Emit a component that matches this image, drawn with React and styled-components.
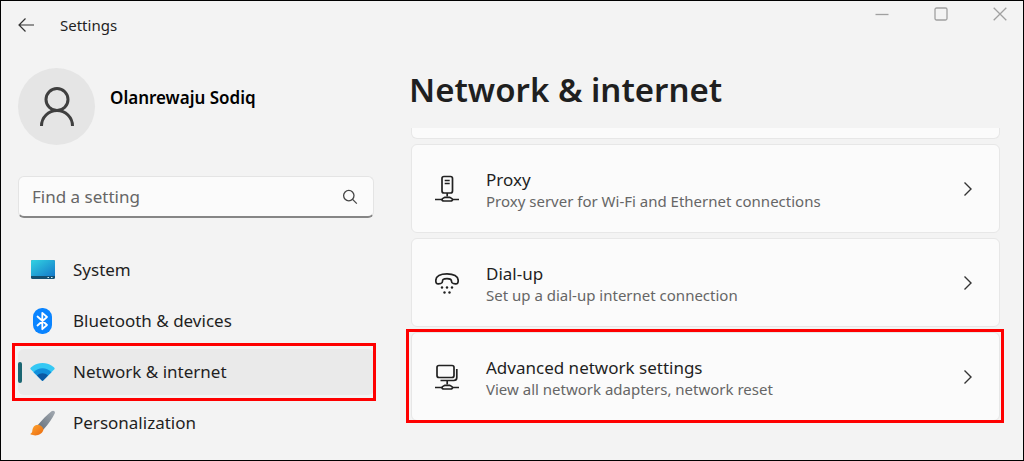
import React from 'react';
import styled, { createGlobalStyle, css } from 'styled-components';

const GlobalStyle = createGlobalStyle`
  * {
    box-sizing: border-box;
  }

  body {
    margin: 0;
    background: #f3f3f3;
    color: #1f1f1f;
    font-family: "Noto Sans", "Open Sans", sans-serif;
  }

  button,
  input {
    font-family: inherit;
    color: inherit;
  }
`;

// Red frame drawn over the highlighted entries
const highlight = css`
  &::after {
    content: '';
    position: absolute;
    inset: ${(props) => props.$inset};
    border: 3px solid #fe0000;
    pointer-events: none;
  }
`;

const Window = styled.div`
  display: flex;
  flex-direction: column;
  min-height: 100vh;
  border: 1px solid #000;
`;

const TitleBar = styled.header`
  display: flex;
  align-items: flex-start;
  height: 48px;
`;

const BackButton = styled.button`
  display: flex;
  padding: 16px 16px;
  border: 0;
  background: none;
`;

const AppName = styled.span`
  flex: 1;
  margin-left: 9px;
  font-size: 15px;
  line-height: 48px;
`;

const Captions = styled.div`
  display: flex;
  gap: 13px;
`;

const CaptionButton = styled.button`
  display: flex;
  align-items: center;
  justify-content: center;
  width: 46px;
  height: 26px;
  padding: 0;
  border: 0;
  background: none;
  color: #a0a0a0;
`;

const Body = styled.div`
  display: flex;
  flex: 1;
  gap: 37px;
  padding: 0 23px 12px 17px;
`;

const Sidebar = styled.aside`
  flex: 0 0 356px;
  padding-top: 19px;
`;

const Profile = styled.div`
  display: flex;
  align-items: center;
  gap: 15px;
`;

const Avatar = styled.div`
  display: flex;
  align-items: center;
  justify-content: center;
  width: 77px;
  height: 77px;
  border-radius: 50%;
  background: #e5e5e5;
`;

const UserName = styled.div`
  padding-bottom: 18px;
  font-size: 17px;
  font-weight: 600;
  line-height: 24px;
  color: #000;
`;

const SearchBox = styled.label`
  display: flex;
  align-items: center;
  height: 42px;
  margin: 31px 0 29px;
  padding: 0 15px 0 13px;
  border: 1px solid #e4e4e4;
  border-bottom: 2px solid #868686;
  border-radius: 6px;
  background: #fbfbfb;
`;

const SearchInput = styled.input`
  flex: 1;
  min-width: 0;
  padding: 0;
  border: 0;
  outline: 0;
  background: none;
  font-size: 17px;
  line-height: 24px;

  &::placeholder {
    color: #666;
    opacity: 1;
  }
`;

const Nav = styled.nav`
  display: flex;
  flex-direction: column;
  gap: 5px;
`;

const NavItem = styled.a`
  position: relative;
  display: flex;
  align-items: center;
  gap: 18px;
  height: 46px;
  padding-left: 12px;
  border-radius: 6px;
  background: ${(props) => (props.$active ? '#eaeaea' : 'transparent')};
  color: #1f1f1f;
  font-size: 17px;
  line-height: 24px;
  text-decoration: none;

  ${(props) =>
    props.$active &&
    css`
      &::before {
        content: '';
        position: absolute;
        left: 0;
        width: 4px;
        height: 21px;
        border-radius: 2px;
        background: #1b6672;
      }
    `}

  ${(props) => props.$inset && highlight}
`;

const Main = styled.main`
  flex: 1;
  min-width: 0;
`;

const Title = styled.h1`
  margin: 17px 0 14px -2px;
  font-size: 33px;
  font-weight: 600;
  line-height: 48px;
`;

const CardList = styled.div`
  display: flex;
  flex-direction: column;
  gap: 5px;
`;

const CardTail = styled.div`
  height: 11px;
  border: 1px solid #e7e7e7;
  border-top: 0;
  border-radius: 0 0 6px 6px;
  background: #fbfbfb;
`;

const Card = styled.button`
  position: relative;
  display: flex;
  align-items: center;
  height: 89px;
  padding: 0 24px 0 23px;
  border: 1px solid #e7e7e7;
  border-radius: 6px;
  background: #fbfbfb;
  text-align: left;

  ${(props) => props.$inset && highlight}
`;

const CardText = styled.span`
  display: flex;
  flex: 1;
  flex-direction: column;
  margin-left: 27px;
  padding-top: 2px;
`;

const CardTitle = styled.span`
  font-size: 17px;
  line-height: 22px;
`;

const CardHint = styled.span`
  font-size: 15px;
  line-height: 20px;
  color: #666;
`;

const BackIcon = () => (
  <svg width="18" height="16" viewBox="0 0 18 16" fill="none" stroke="#333" strokeWidth="1.2">
    <path d="M17 8H2M8.5 1.5L2 8l6.500 6.500" />
  </svg>
);

const MinimizeIcon = () => (
  <svg width="14" height="14" viewBox="0 0 14 14" fill="none" stroke="currentColor" strokeWidth="1.3">
    <path d="M.5 7.500h13" />
  </svg>
);

const MaximizeIcon = () => (
  <svg width="14" height="14" viewBox="0 0 14 14" fill="none" stroke="currentColor" strokeWidth="1.3">
    <rect x="1" y="1" width="12" height="12" rx="1.500" />
  </svg>
);

const CloseIcon = () => (
  <svg width="14" height="14" viewBox="0 0 14 14" fill="none" stroke="currentColor" strokeWidth="1.3">
    <path d="M.7.7l12.600 12.600M13.300.7L.7 13.300" />
  </svg>
);

const PersonIcon = () => (
  <svg width="36" height="42" viewBox="0 0 36 42" fill="none" stroke="#3f3f3f" strokeWidth="3">
    <circle cx="18" cy="13.500" r="11" />
    <path d="M2.500 40a15.500 15.500 0 0 1 31 0" />
  </svg>
);

const SearchIcon = () => (
  <svg width="16" height="16" viewBox="0 0 16 16" fill="none" stroke="#444" strokeWidth="1.3">
    <circle cx="6.800" cy="6.600" r="5.200" />
    <path d="M10.600 10.400l4.200 4.200" />
  </svg>
);

const SystemIcon = () => (
  <svg width="25" height="20" viewBox="0 0 25 20">
    <defs>
      <linearGradient id="screen" x1="0" y1="0" x2="1" y2="1">
        <stop offset="0" stopColor="#32d3e2" />
        <stop offset="1" stopColor="#1479c9" />
      </linearGradient>
    </defs>
    <rect x="1" y="0" width="24" height="19" rx="1.500" fill="#134f70" />
    <path d="M1 16V1.500A1.500 1.500 0 0 1 2.500 0h21A1.500 1.500 0 0 1 25 1.500V16z" fill="url(#screen)" />
    <path d="M17.500 17h1.500v1h-1.500zM21 17h1.500v1H21z" fill="#d7f2fa" />
  </svg>
);

const BluetoothIcon = () => (
  <svg width="25" height="26" viewBox="0 0 25 26">
    <rect x="3" y="0" width="19" height="26" rx="9" fill="#0a84ff" />
    <path
      d="M7.500 8.500l9.500 8.500-4.700 4.200V4.800L17 9l-9.500 8.500"
      fill="none"
      stroke="#fff"
      strokeWidth="1.800"
      strokeLinejoin="round"
      strokeLinecap="round"
    />
  </svg>
);

const WifiIcon = () => (
  <svg width="25" height="20" viewBox="0 0 25 20">
    <path d="M.3 6.500C.3 5.800 5 1 12.500 1s12.200 4.800 12.200 5.500c0 .4-.4.900-.8 1.300L12.500 19 1.100 7.800c-.4-.4-.8-.9-.8-1.300z" fill="#35c8f4" />
    <path d="M3.500 10.200C8.500 4.800 16.500 4.800 21.500 10.200L12.500 19z" fill="#1290dc" />
    <path d="M7 13.600c3.200-3.200 7.800-3.200 11 0l-4.800 4.900a1 1 0 0 1-1.400 0z" fill="#0c59a4" />
  </svg>
);

const BrushIcon = () => (
  <svg width="25" height="26" viewBox="0 0 25 26">
    <defs>
      <linearGradient id="handle" x1="1" y1="0" x2="0" y2="1">
        <stop offset="0" stopColor="#a3aab2" />
        <stop offset="1" stopColor="#66707b" />
      </linearGradient>
      <linearGradient id="bristle" x1="0" y1="0" x2="1" y2="1">
        <stop offset="0" stopColor="#ffa52f" />
        <stop offset="1" stopColor="#ea6a10" />
      </linearGradient>
    </defs>
    <path d="M21.500 1.300c1.800-1.500 4.200.1 3.200 2.300-2 4.500-6 10.400-11.200 16L8 14.800C12 10 17 5 21.500 1.300z" fill="url(#handle)" />
    <path d="M8 14.800c2.500.3 5 2.400 5.500 4.800C12.500 25 6 26.500.8 24.600c-.5-.2-.5-.8 0-1 2.200-1.200 1-3.100 2.200-5.600 1-2 2.800-3.200 5-3.200z" fill="url(#bristle)" />
  </svg>
);

const ProxyIcon = () => (
  <svg width="24" height="28" viewBox="0 0 24 28" fill="none" stroke="#222" strokeWidth="1.700">
    <rect x="7" y="1.500" width="10.500" height="16.500" rx="2" />
    <path d="M9.700 5.500h5M9.700 8.500h5M12.200 18v3.500M0 24.500h7M17.500 24.500H24" />
    <path d="M7 24.500c0-1.200 2-1.600 3-2.200h4.500c1 .6 3 1 3 2.200s-1.200 1.500-2 1.500H9c-1 0-2-.3-2-1.500z" />
  </svg>
);

const DialUpIcon = () => (
  <svg width="24" height="24" viewBox="0 0 24 24" fill="none" stroke="#222" strokeWidth="1.700">
    <path d="M12 2.800C5.500 2.800.8 5 .8 9.500c0 3 1.200 3.600 2.700 3.400l2.300-.4c1.200-.2 1.700-1 1.700-2.200 0-1.500.5-2.600 4.500-2.600s4.500 1.100 4.500 2.600c0 1.200.5 2 1.700 2.200l2.300.4c1.500.2 2.700-.4 2.700-3.400C23.200 5 18.500 2.800 12 2.800z" />
    <g fill="#222" stroke="none">
      <circle cx="7" cy="16.500" r="1.200" />
      <circle cx="12" cy="16.500" r="1.200" />
      <circle cx="17" cy="16.500" r="1.200" />
      <circle cx="9.500" cy="21.500" r="1.200" />
      <circle cx="14.500" cy="21.500" r="1.200" />
    </g>
  </svg>
);

const AdaptersIcon = () => (
  <svg width="24" height="28" viewBox="0 0 24 28" fill="none" stroke="#222" strokeWidth="1.700">
    <rect x="2" y="2.500" width="17" height="12" rx="2" />
    <path d="M21.800 6v8.500c0 2-1 3-3 3H5.500M12.200 17.500v4M0 24.500h7M17.500 24.500H24" />
    <path d="M7 24.500c0-1.200 2-1.600 3-2.200h4.500c1 .6 3 1 3 2.200s-1.200 1.500-2 1.500H9c-1 0-2-.3-2-1.500z" />
  </svg>
);

const ChevronIcon = () => (
  <svg width="14" height="16" viewBox="0 0 14 16" fill="none" stroke="#333" strokeWidth="1.400">
    <path d="M3.500 1.500L10 8l-6.500 6.500" />
  </svg>
);

const navItems = [
  { label: 'System', href: '#system', icon: SystemIcon },
  { label: 'Bluetooth & devices', href: '#bluetooth', icon: BluetoothIcon },
  { label: 'Network & internet', href: '#network', icon: WifiIcon, active: true, inset: '-6px -2px -6px -6px' },
  { label: 'Personalization', href: '#personalization', icon: BrushIcon },
];

const cards = [
  { title: 'Proxy', hint: 'Proxy server for Wi-Fi and Ethernet connections', icon: ProxyIcon },
  { title: 'Dial-up', hint: 'Set up a dial-up internet connection', icon: DialUpIcon },
  {
    title: 'Advanced network settings',
    hint: 'View all network adapters, network reset',
    icon: AdaptersIcon,
    inset: '-4px -5px -3px -6px',
  },
];

const App = () => {
  return (
    <>
      <GlobalStyle />
      <Window>
        <TitleBar>
          <BackButton aria-label="Back">
            <BackIcon />
          </BackButton>
          <AppName>Settings</AppName>
          <Captions>
            <CaptionButton aria-label="Minimize">
              <MinimizeIcon />
            </CaptionButton>
            <CaptionButton aria-label="Maximize">
              <MaximizeIcon />
            </CaptionButton>
            <CaptionButton aria-label="Close">
              <CloseIcon />
            </CaptionButton>
          </Captions>
        </TitleBar>

        <Body>
          <Sidebar>
            <Profile>
              <Avatar>
                <PersonIcon />
              </Avatar>
              <UserName>Olanrewaju Sodiq</UserName>
            </Profile>

            <SearchBox>
              <SearchInput type="text" placeholder="Find a setting" aria-label="Find a setting" />
              <SearchIcon />
            </SearchBox>

            <Nav>
              {navItems.map(({ label, href, icon: Icon, active, inset }) => (
                <NavItem key={label} href={href} $active={active} $inset={inset}>
                  <Icon />
                  {label}
                </NavItem>
              ))}
            </Nav>
          </Sidebar>

          <Main>
            <Title>Network &amp; internet</Title>
            <CardList>
              <CardTail />
              {cards.map(({ title, hint, icon: Icon, inset }) => (
                <Card key={title} $inset={inset}>
                  <Icon />
                  <CardText>
                    <CardTitle>{title}</CardTitle>
                    <CardHint>{hint}</CardHint>
                  </CardText>
                  <ChevronIcon />
                </Card>
              ))}
            </CardList>
          </Main>
        </Body>
      </Window>
    </>
  );
};

export default App;
